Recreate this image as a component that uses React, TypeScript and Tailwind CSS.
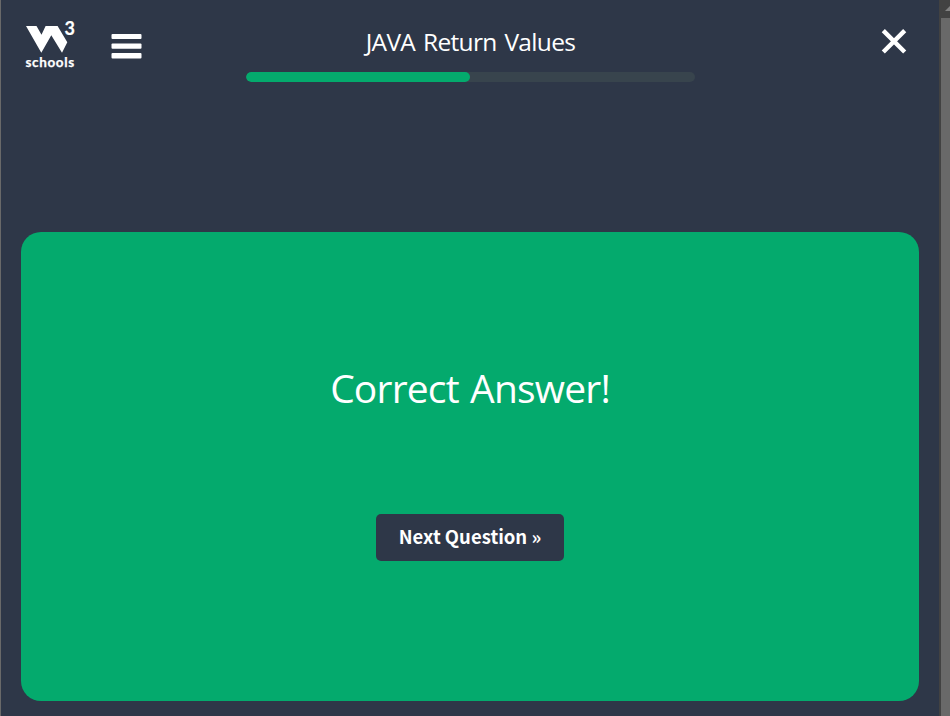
import React from "react";

function Logo() {
  return (
    <svg width="56" height="50" viewBox="0 0 56 50" className="block overflow-visible text-white" fill="currentColor" aria-label="w3schools">
      <path d="M1 6H11.5L16.5 14.7L20.6 6H32.6L42.3 22.3L37 32.7L26.3 15.2L16.3 32.7Z" />
      <text x="39.4" y="15.3" fontSize="18" fontWeight="700" fontFamily="Lato, sans-serif" stroke="currentColor" strokeWidth="0.2">
        3
      </text>
      <text x="0.5" y="46.8" fontSize="13.5" fontWeight="700" textLength="48.6" lengthAdjust="spacing" fontFamily="Lato, sans-serif" stroke="currentColor" strokeWidth="0.25">
        schools
      </text>
    </svg>
  );
}

function MenuIcon() {
  return (
    <svg width="31" height="25" viewBox="0 0 31 25" fill="white" className="block">
      <rect x="0.5" width="30" height="5" rx="1" />
      <rect x="0.5" y="9.5" width="30" height="5.2" rx="1" />
      <rect x="0.5" y="19" width="30" height="5.4" rx="1" />
    </svg>
  );
}

function CloseIcon() {
  return (
    <svg width="26" height="26" viewBox="0 0 26 26" stroke="white" strokeWidth="4.4" className="block">
      <path d="M2.3 2.6L23.7 24M23.7 2.6L2.3 24" />
    </svg>
  );
}

export default function App() {
  return (
    <div className="flex h-[716px] w-[950px] overflow-hidden border-l border-[#696969] bg-[#2e3748] text-white">
      <div className="flex w-[938px] shrink-0 flex-col">
        <header className="flex h-[232px] items-start">
          <div className="flex w-[245px] pl-6">
            <button className="mt-5">
              <Logo />
            </button>
            <button className="mt-[34px] ml-[30px] self-start">
              <MenuIcon />
            </button>
          </div>
          <div className="flex w-[449px] flex-col items-center">
            <h1 className="mt-[24px] h-[48px] text-[24.5px] leading-[36px] tracking-[-0.65px] [word-spacing:2px] whitespace-nowrap font-['Open_Sans',sans-serif]">
              JAVA Return Values
            </h1>
            <div className="h-[10px] w-full overflow-hidden rounded-full bg-[#38444d]">
              <div className="h-full w-[224px] rounded-full bg-[#04aa6d]" />
            </div>
          </div>
          <button className="mt-7 ml-[186px]">
            <CloseIcon />
          </button>
        </header>
        <main className="ml-5 flex h-[469px] w-[898px] flex-col items-center rounded-[20px] bg-[#04aa6d]">
          <h2 className="mt-[126px] text-[39px] leading-[60px] tracking-[-0.82px] [word-spacing:2px] whitespace-nowrap font-['Open_Sans',sans-serif]">
            Correct Answer!
          </h2>
          <button className="mt-[96px] flex h-[47px] w-[188px] justify-center rounded-[5px] bg-[#2e3748] text-[18.5px] leading-[45px] font-bold whitespace-nowrap font-['Noto_Sans_CJK_SC',sans-serif]">
            Next Question »
          </button>
        </main>
      </div>
      <aside className="flex w-[11px] shrink-0 flex-col bg-[#424242]">
        <svg width="11" height="18" viewBox="0 0 11 18" className="block">
          <path d="M6 11L11 6V11Z" fill="#828282" />
        </svg>
        <div className="ml-[2px] grow bg-[#696969]" />
      </aside>
    </div>
  );
}
